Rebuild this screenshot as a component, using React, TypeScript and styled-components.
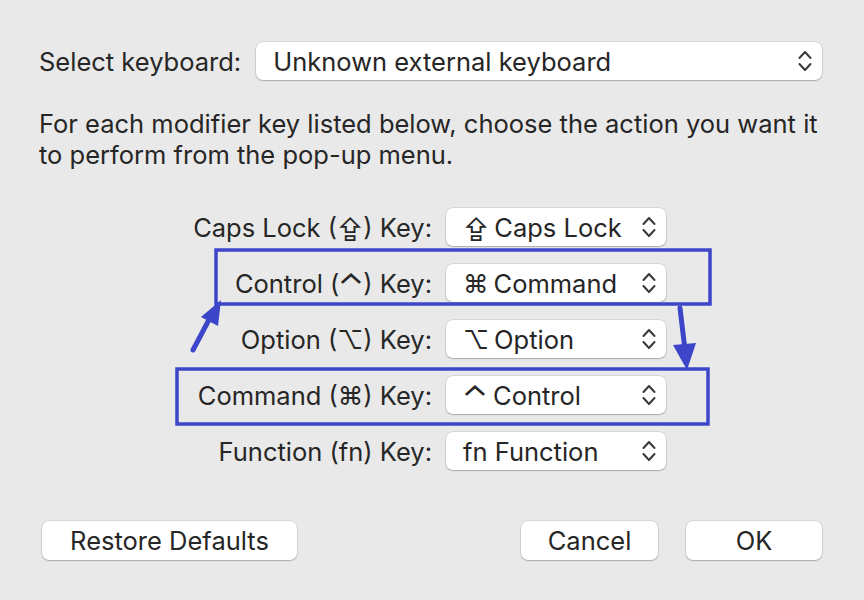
import React from 'react';
import styled, { createGlobalStyle } from 'styled-components';

const GlobalStyle = createGlobalStyle`
  html, body {
    margin: 0;
    padding: 0;
    background: #e9e9e9;
  }
  body {
    font-family: Inter, "Liberation Sans", "DejaVu Sans", sans-serif;
    color: #262626;
  }
`;

const Window = styled.div`
  position: relative;
  width: 864px;
  height: 600px;
  box-sizing: border-box;
  padding: 42px 42px 40px 39px;
  display: flex;
  flex-direction: column;
  background: #e9e9e9;
  overflow: hidden;
`;

const TopRow = styled.div`
  display: flex;
  align-items: center;
  gap: 15px;
`;

const Label = styled.span`
  font-size: 25.5px;
  white-space: nowrap;
  color: #262626;
`;

const Popup = styled.div<{ $width?: number }>`
  display: flex;
  align-items: center;
  box-sizing: border-box;
  height: 38px;
  padding: 0 9px 0 17px;
  background: #ffffff;
  border-radius: 7px;
  box-shadow: 0 0 0 0.5px rgba(0, 0, 0, 0.14), 0 1px 1.5px rgba(0, 0, 0, 0.22);
  font-size: 25.5px;
  color: #262626;
  ${({ $width }) => ($width ? `width: ${$width}px;` : 'flex: 1;')}
`;

const PopupText = styled.span`
  flex: 1;
  white-space: nowrap;
`;

const Glyph = styled.span`
  display: inline-block;
  margin-right: 5px;
`;

const Caret = styled.span<{ $gap?: number }>`
  display: inline-block;
  width: 20px;
  text-align: center;
  margin: 0 ${({ $gap }) => $gap ?? 2}px 0 2px;
  transform: scale(1.35, 1.2);
  transform-origin: 50% 30%;
`;

const Intro = styled.p`
  margin: 28px 0 0;
  font-size: 25.5px;
  line-height: 31px;
  color: #262626;
`;

const KeyGrid = styled.div`
  margin-top: 38px;
  display: grid;
  grid-template-columns: 393px 220px;
  column-gap: 14px;
  row-gap: 18px;
  align-items: center;
`;

const KeyLabel = styled.span`
  font-size: 25.5px;
  text-align: right;
  white-space: nowrap;
`;

const Footer = styled.div`
  margin-top: auto;
  display: flex;
  align-items: center;
  gap: 28px;
  padding-left: 3px;
`;

const Button = styled.button<{ $width: number }>`
  width: ${({ $width }) => $width}px;
  height: 39px;
  border: none;
  border-radius: 7px;
  background: #ffffff;
  box-shadow: 0 0 0 0.5px rgba(0, 0, 0, 0.14), 0 1px 1.5px rgba(0, 0, 0, 0.22);
  font-family: Inter, "Liberation Sans", sans-serif;
  font-size: 25.5px;
  color: #262626;
  padding: 0;
`;

const Spacer = styled.div`
  flex: 1;
`;

const Overlay = styled.svg`
  position: absolute;
  left: 0;
  top: 0;
  pointer-events: none;
`;

const Chevrons = () => (
  <svg width="16" height="26" viewBox="0 0 16 26">
    <path d="M2.5 10 L8 4 L13.5 10" fill="none" stroke="#3a3a3a" strokeWidth="2" strokeLinecap="round" strokeLinejoin="round" />
    <path d="M2.5 16 L8 22 L13.5 16" fill="none" stroke="#3a3a3a" strokeWidth="2" strokeLinecap="round" strokeLinejoin="round" />
  </svg>
);

const rows = [
  { label: <>Caps Lock (⇪) Key:</>, glyph: <Glyph>⇪</Glyph>, value: 'Caps Lock' },
  { label: <>Control (<Caret>⌃</Caret>) Key:</>, glyph: <Glyph>⌘</Glyph>, value: 'Command' },
  { label: <>Option (⌥) Key:</>, glyph: <Glyph>⌥</Glyph>, value: 'Option' },
  { label: <>Command (⌘) Key:</>, glyph: <Caret $gap={8}>⌃</Caret>, value: 'Control' },
  { label: <>Function (fn) Key:</>, glyph: 'fn ', value: 'Function' },
];

const blue = '#3d46c9';

const App: React.FC = () => {
  return (
    <>
      <GlobalStyle />
      <Window>
        <TopRow>
          <Label>Select keyboard:</Label>
          <Popup>
            <PopupText>Unknown external keyboard</PopupText>
            <Chevrons />
          </Popup>
        </TopRow>

        <Intro>
          For each modifier key listed below, choose the action you want it to perform from the pop-up menu.
        </Intro>

        <KeyGrid>
          {rows.map((r) => (
            <React.Fragment key={r.value}>
              <KeyLabel>{r.label}</KeyLabel>
              <Popup $width={220}>
                <PopupText>
                  {r.glyph}
                  {r.value}
                </PopupText>
                <Chevrons />
              </Popup>
            </React.Fragment>
          ))}
        </KeyGrid>

        <Footer>
          <Button $width={255}>Restore Defaults</Button>
          <Spacer />
          <Button $width={137}>Cancel</Button>
          <Button $width={136}>OK</Button>
        </Footer>

        <Overlay width="864" height="600" viewBox="0 0 864 600">
          <rect x="216" y="250" width="494" height="54" fill="none" stroke={blue} strokeWidth="3.5" />
          <rect x="177" y="369" width="531" height="55" fill="none" stroke={blue} strokeWidth="3.5" />
          <line x1="193" y1="350" x2="212" y2="314" stroke={blue} strokeWidth="5" strokeLinecap="round" />
          <polygon points="221,300 201,317 218,326" fill={blue} />
          <line x1="680" y1="308" x2="685" y2="350" stroke={blue} strokeWidth="5" strokeLinecap="round" />
          <polygon points="687,370 673,345 696,343" fill={blue} />
        </Overlay>
      </Window>
    </>
  );
};

export default App;
